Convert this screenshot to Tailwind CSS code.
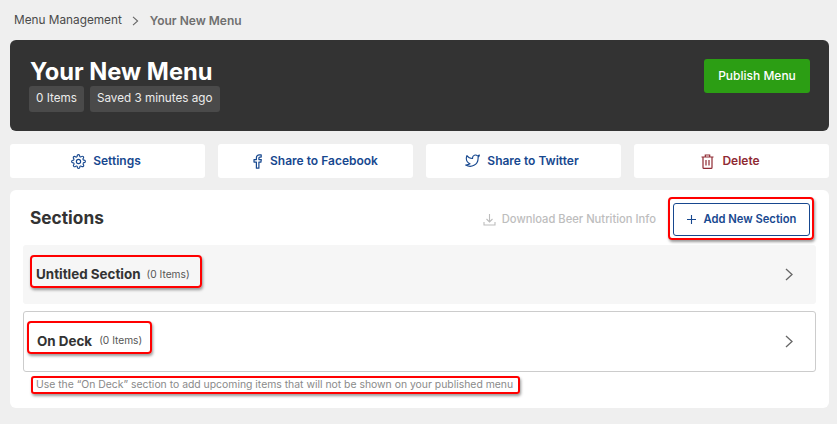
<!DOCTYPE html>
<html lang="en">
<head>
    <meta charset="UTF-8">
    <title>Your New Menu</title>
    <script src="https://cdn.jsdelivr.net/npm/@tailwindcss/browser@4"></script>
</head>
<body class="bg-[#efefef] font-['Inter',sans-serif] text-[#333] h-[424px] overflow-hidden">
    <div class="pl-[10px] pr-[8px]">
        <!-- breadcrumb -->
        <div class="h-[40px] pt-[1px] flex items-center pl-[4px] text-[11.800px] text-[#4a4a4a]">
            <span>Menu Management</span>
            <svg class="w-[7px] h-[10px] ml-[10px] mr-[11px]" viewBox="0 0 7 10" fill="none" stroke="#666" stroke-width="1.1"><path d="M1 .8 5.600 5 1 9.200"/></svg>
            <span class="text-[12px] font-semibold text-[#6f6f6f]">Your New Menu</span>
        </div>

        <!-- header -->
        <div class="h-[91px] bg-[#333] rounded-[6px] flex justify-between pl-[19px] pr-[19px] pt-[19px]">
            <div>
                <h1 class="text-[23.700px] leading-[24px] font-bold text-white pt-[1px] mb-[2px] pl-[1px]">Your New Menu</h1>
                <div class="flex gap-[6px]">
                    <span class="h-[26px] px-[7px] flex items-center rounded-[3px] bg-[#4a4a4a] text-[11.700px] text-[#ececec]">0 Items</span>
                    <span class="h-[26px] px-[7px] flex items-center rounded-[3px] bg-[#4a4a4a] text-[11.700px] text-[#ececec]">Saved 3 minutes ago</span>
                </div>
            </div>
            <button class="w-[106px] h-[34px] bg-[#2c9e14] rounded-[3px] text-white text-[12px] font-medium">Publish Menu</button>
        </div>

        <!-- actions -->
        <div class="grid grid-cols-4 gap-[13px] mt-[13px]">
            <button class="h-[34px] pr-[3px] bg-white rounded-[3px] flex items-center justify-center gap-[7px] text-[12px] font-semibold text-[#17488f]">
                <svg class="w-[15px] h-[15px]" viewBox="0 0 24 24" fill="none" stroke="#17488f" stroke-width="1.8" stroke-linejoin="round"><circle cx="12" cy="12" r="3.400"/><path d="M19.400 15a1.650 1.650 0 0 0 .33 1.820l.06.06a2 2 0 1 1-2.830 2.830l-.06-.06a1.650 1.650 0 0 0-2.800 1.170V21a2 2 0 0 1-4 0v-.09A1.650 1.650 0 0 0 7.300 19.700l-.06.06a2 2 0 1 1-2.830-2.830l.06-.06a1.650 1.650 0 0 0-1.170-2.800H3a2 2 0 0 1 0-4h.09A1.650 1.650 0 0 0 4.300 7.300l-.06-.06a2 2 0 1 1 2.830-2.830l.06.06a1.650 1.650 0 0 0 2.800-1.170V3a2 2 0 0 1 4 0v.09a1.650 1.650 0 0 0 2.800 1.170l.06-.06a2 2 0 1 1 2.830 2.830l-.06.06a1.650 1.650 0 0 0 1.170 2.800H21a2 2 0 0 1 0 4h-.09A1.650 1.650 0 0 0 19.400 15z"/></svg>
                Settings
            </button>
            <button class="h-[34px] bg-white rounded-[3px] flex items-center justify-center gap-[8px] text-[12px] font-semibold text-[#17488f]">
                <svg class="w-[9px] h-[15px]" viewBox="0 0 9 15" fill="none" stroke="#17488f" stroke-width="1.2" stroke-linejoin="round"><path d="M8.200.8H6.300C4.600.8 3.400 2 3.400 3.700v1.900H1v2.500h2.400v6.100h2.500V8.100h2l.4-2.500H5.900V4c0-.6.4-.9.9-.9h1.400z"/></svg>
                Share to Facebook
            </button>
            <button class="h-[34px] pr-[3px] bg-white rounded-[3px] flex items-center justify-center gap-[7px] text-[12px] font-semibold text-[#17488f]">
                <svg class="w-[15px] h-[14px]" viewBox="0 0 24 22" fill="none" stroke="#17488f" stroke-width="1.8" stroke-linejoin="round"><path d="M23 1.500a10 10 0 0 1-3 1.500 4.500 4.500 0 0 0-7.900 3v1A10.700 10.700 0 0 1 3 2.500s-4 9 5 13a11.600 11.600 0 0 1-7 2c9 5 20 0 20-11.500 0-.3 0-.6-.1-.8A7.700 7.700 0 0 0 23 1.500z"/></svg>
                Share to Twitter
            </button>
            <button class="h-[34px] pr-[2px] bg-white rounded-[3px] flex items-center justify-center gap-[8px] text-[12px] font-semibold text-[#8f2a33]">
                <svg class="w-[13px] h-[15px]" viewBox="0 0 13 15" fill="none" stroke="#8f2a33" stroke-width="1.2"><path d="M.5 3h12M4.300 3V1h4.400v2M2 3v10.500c0 .5.300.9.900.9h7.200c.6 0 .9-.4.900-.9V3M5 6v5.500M8 6v5.500"/></svg>
                Delete
            </button>
        </div>

        <!-- sections -->
        <div class="mt-[12px] h-[218px] bg-white rounded-[6px] px-[13px]">
            <div class="h-[55px] pt-[2px] flex items-center justify-between">
                <h2 class="pl-[7px] mb-[2px] text-[17.300px] font-bold">Sections</h2>
                <div class="flex items-center">
                    <a class="flex items-center gap-[6px] mt-[2px] text-[11.200px] font-medium text-[#bdbdbd]">
                        <svg class="w-[13px] h-[13px]" viewBox="0 0 13 13" fill="none" stroke="#bdbdbd" stroke-width="1.1"><path d="M6.500 1v8M3.500 6l3 3 3-3M1 9v3h11V9"/></svg>
                        Download Beer Nutrition Info
                    </a>
                    <div class="ml-[12px] mr-[2px] pt-[4px] pb-[2px] pl-[3px] pr-[2px] border-2 border-[#f00] rounded-[4px] shadow-[1px_2px_3px_rgba(0,0,0,.4)]">
                        <button class="w-[137px] h-[33px] flex items-center justify-center gap-[8px] border border-[#17488f] rounded-[3px] text-[11.200px] font-semibold text-[#17488f]">
                            <svg class="w-[9px] h-[9px]" viewBox="0 0 9 9" stroke="#17488f" stroke-width="1.1"><path d="M4.500 0v9M0 4.500h9"/></svg>
                            Add New Section
                        </button>
                    </div>
                </div>
            </div>

            <div class="h-[59px] bg-[#f6f6f6] rounded-[3px] flex items-center justify-between pl-[7px] pr-[23px]">
                <div class="self-start mt-[10px] h-[33px] w-[172px] pt-[6px] flex items-center gap-[6px] px-[4px] border-2 border-[#f00] rounded-[4px] shadow-[1px_2px_3px_rgba(0,0,0,.4)] whitespace-nowrap">
                    <span class="text-[13.400px] font-bold">Untitled Section</span>
                    <span class="text-[10.200px] text-[#555]">(0 Items)</span>
                </div>
                <svg class="w-[8px] h-[13px]" viewBox="0 0 8 13" fill="none" stroke="#666" stroke-width="1.3"><path d="M1 1l6 5.500L1 12"/></svg>
            </div>

            <div class="mt-[7px] h-[61px] border border-[#ccc] rounded-[3px] flex items-center justify-between pl-[3px] pr-[22px]">
                <div class="self-start mt-[9px] h-[33px] w-[125px] pt-[7px] flex items-center gap-[7px] px-[8px] border-2 border-[#f00] rounded-[4px] shadow-[1px_2px_3px_rgba(0,0,0,.4)] whitespace-nowrap">
                    <span class="text-[13.400px] font-bold">On Deck</span>
                    <span class="text-[10.200px] text-[#555]">(0 Items)</span>
                </div>
                <svg class="w-[8px] h-[13px]" viewBox="0 0 8 13" fill="none" stroke="#666" stroke-width="1.3"><path d="M1 1l6 5.500L1 12"/></svg>
            </div>

            <div class="mt-[4px] ml-[8px] w-[489px] h-[18px] flex items-center pl-[3px] border-2 border-[#f00] rounded-[3px] shadow-[1px_2px_3px_rgba(0,0,0,.4)] text-[10.400px] text-[#8a8a8a] whitespace-nowrap">
                Use the “On Deck” section to add upcoming items that will not be shown on your published menu
            </div>
        </div>
    </div>
</body>
</html>
